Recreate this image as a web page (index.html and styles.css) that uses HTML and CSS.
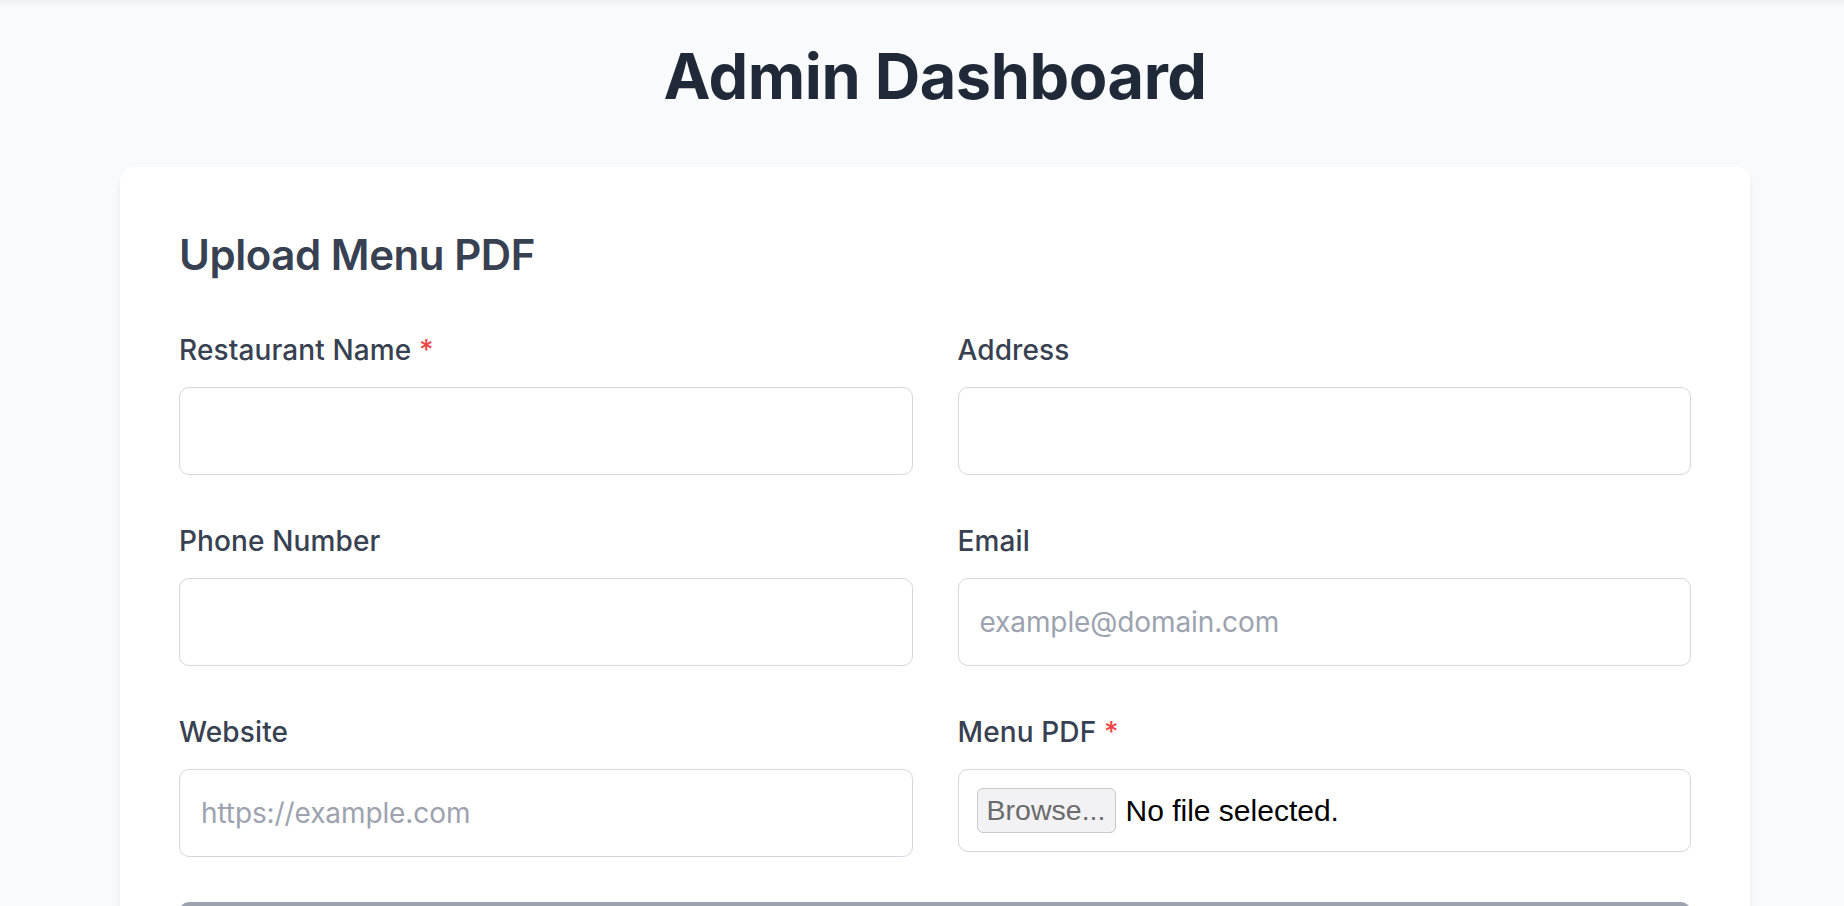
FILE: index.html
```html
<!DOCTYPE html>
<html lang="en">
<head>
<meta charset="utf-8">
<title>Admin Dashboard</title>
<link rel="stylesheet" href="styles.css">
</head>
<body>
<div class="page">
  <h1 class="title">Admin Dashboard</h1>
  <section class="card">
    <h2 class="card-title">Upload Menu PDF</h2>
    <form class="form">
      <div class="grid">
        <div class="field">
          <label class="label">Restaurant Name <span class="req">*</span></label>
          <input class="input" type="text">
        </div>
        <div class="field">
          <label class="label">Address</label>
          <input class="input" type="text">
        </div>
        <div class="field">
          <label class="label">Phone Number</label>
          <input class="input" type="text">
        </div>
        <div class="field">
          <label class="label">Email</label>
          <input class="input" type="text" placeholder="example@domain.com">
        </div>
        <div class="field">
          <label class="label">Website</label>
          <input class="input" type="text" placeholder="https://example.com">
        </div>
        <div class="field">
          <label class="label">Menu PDF <span class="req">*</span></label>
          <div class="file">
            <span class="file-btn">Browse...</span>
            <span class="file-text">No file selected.</span>
          </div>
        </div>
      </div>
      <button class="submit" type="button" disabled><span class="submit-text">Upload Menu</span></button>
    </form>
  </section>
</div>
</body>
</html>
```

FILE: styles.css
```css
html, body {
  margin: 0;
  padding: 0;
}

body {
  background: linear-gradient(to bottom, rgba(0, 0, 0, 0.045) 0, rgba(0, 0, 0, 0) 8px) no-repeat, #f9fafb;
  font-family: Inter, "Noto Sans", sans-serif;
  color: #374151;
  overflow: hidden;
}

.page {
  width: 1630px;
  margin-left: 120px;
  padding-top: 41px;
}

.title {
  margin: 0 0 56px;
  font-size: 63px;
  line-height: 70px;
  font-weight: 700;
  letter-spacing: -0.45px;
  color: #1f2937;
  text-align: center;
}

.card {
  background: #ffffff;
  border-radius: 14px;
  padding: 60px 59px;
  box-shadow: 0 7px 11px -2px rgba(0, 0, 0, 0.07), 0 3px 7px -3px rgba(0, 0, 0, 0.07);
}

.card-title {
  margin: 0 0 46px;
  font-size: 42px;
  line-height: 56px;
  font-weight: 600;
  letter-spacing: -0.45px;
  color: #374151;
}

.form {
  display: flex;
  flex-direction: column;
  gap: 45px;
}

.grid {
  display: grid;
  grid-template-columns: 1fr 1fr;
  column-gap: 45px;
  row-gap: 45px;
  align-items: start;
}

.field {
  display: flex;
  flex-direction: column;
}

.label {
  font-size: 28px;
  line-height: 42px;
  font-weight: 500;
  letter-spacing: 0.12px;
  color: #374151;
  margin-bottom: 16px;
}

.req {
  color: #ef4444;
}

.input {
  box-sizing: border-box;
  height: 88px;
  width: 100%;
  border: 1px solid #d5d7dd;
  border-radius: 10px;
  padding: 0 21px;
  font-family: Inter, "Noto Sans", sans-serif;
  font-size: 28px;
  letter-spacing: -0.1px;
  color: #111827;
  background: #ffffff;
  outline: none;
}

.input::placeholder {
  color: #9ca3af;
}

.file {
  box-sizing: border-box;
  height: 83px;
  border: 1px solid #d5d7dd;
  border-radius: 10px;
  padding: 0 18px;
  display: flex;
  align-items: center;
  gap: 10px;
  font-family: "Liberation Sans", Arial, sans-serif;
  font-size: 30px;
}

.file-btn {
  box-sizing: border-box;
  width: 139px;
  height: 45px;
  display: flex;
  align-items: center;
  justify-content: center;
  background: #f2f2f4;
  border: 1px solid #c9c9d0;
  border-radius: 6px;
  color: #6b6b6b;
  font-size: 28.5px;
}

.file-text {
  color: #000000;
}

.submit {
  height: 84px;
  border: none;
  border-radius: 10px;
  background: #9ca3af;
  color: #ffffff;
  font-family: Inter, "Noto Sans", sans-serif;
  font-size: 28px;
  font-weight: 600;
}
```
